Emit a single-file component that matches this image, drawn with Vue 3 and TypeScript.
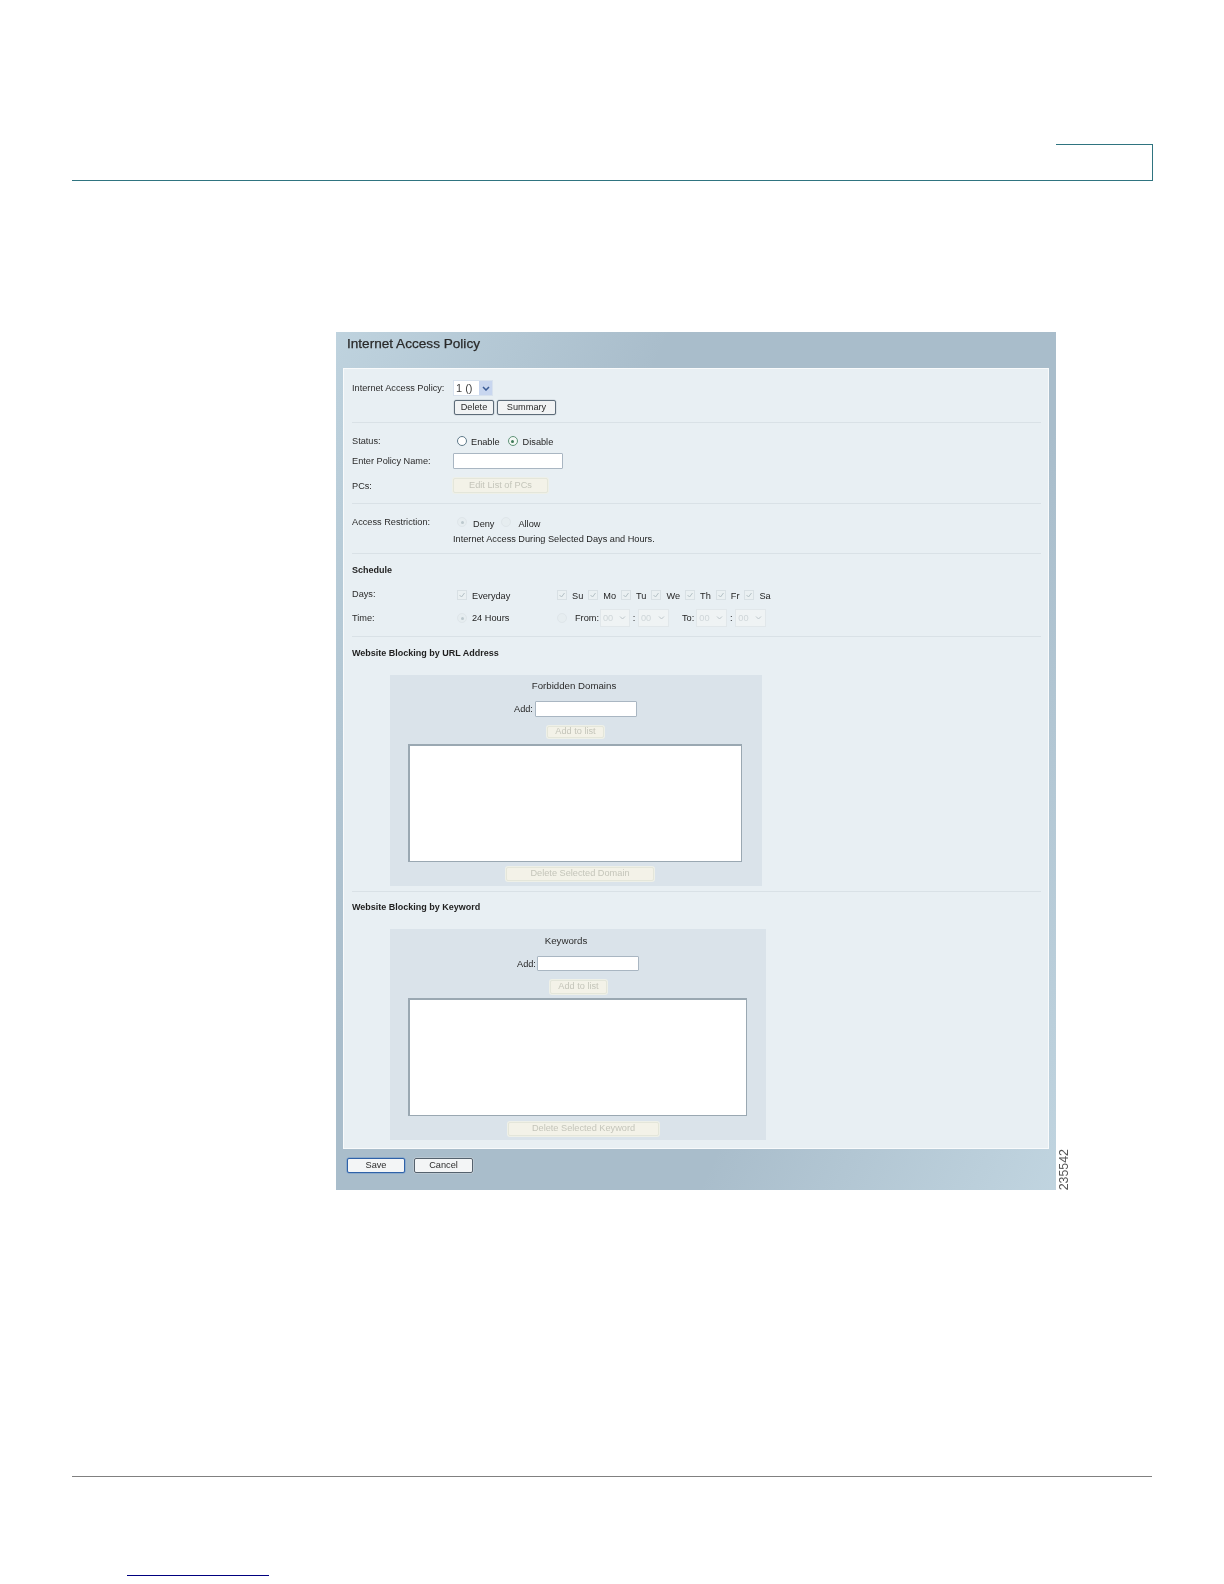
<script setup lang="ts">
const days: string[] = ['Su', 'Mo', 'Tu', 'We', 'Th', 'Fr', 'Sa']
</script>

<template>
  <div class="page">
    <header class="head"><div class="tab"></div></header>

    <section class="panel">
      <div class="blurred">
        <h1 class="title">Internet Access Policy</h1>
        <div class="inner">
          <div class="sec s1">
            <div class="row h16">
              <span class="lbl">Internet Access Policy:</span>
              <div class="sel main"><span class="val">1 ()</span><span class="arrow"><svg width="8" height="5" viewBox="0 0 8 5"><path d="M1 1l3 3 3-3" fill="none" stroke="#3a5c96" stroke-width="1.5"/></svg></span></div>
            </div>
            <div class="row mt4 indent">
              <button class="btn b-delete">Delete</button>
              <button class="btn b-summary">Summary</button>
            </div>
          </div>

          <div class="sec s2">
            <div class="row h16">
              <span class="lbl">Status:</span>
              <span class="radio on ml4"></span><span class="t low ml4">Enable</span>
              <span class="radio on sel-radio ml8"><i></i></span><span class="t low ml5">Disable</span>
            </div>
            <div class="row h16 mt4">
              <span class="lbl">Enter Policy Name:</span>
              <input class="field f-name" type="text" />
            </div>
            <div class="row h15 mt9">
              <span class="lbl">PCs:</span>
              <button class="btn off b-pcs ml1" disabled>Edit List of PCs</button>
            </div>
          </div>

          <div class="sec s3">
            <div class="row h16">
              <span class="lbl">Access Restriction:</span>
              <span class="radio ml4"><i></i></span><span class="t lower ml6">Deny</span>
              <span class="radio ml7"></span><span class="t lower ml7">Allow</span>
            </div>
            <div class="row h16 mt1">
              <span class="lbl"></span>
              <span class="t">Internet Access During Selected Days and Hours.</span>
            </div>
          </div>

          <div class="sec s4">
            <div class="row h16"><strong class="hd">Schedule</strong></div>
            <div class="row h16 mt9">
              <span class="lbl up">Days:</span>
              <div class="cell">
                <span class="check"><svg width="8" height="8" viewBox="0 0 8 8"><path d="M1.5 4l2 2 3-4" fill="none" stroke="#b4c1c6" stroke-width="1"/></svg></span>
                <span class="t low ml5">Everyday</span>
              </div>
              <div class="daylist">
                <span v-for="d in days" :key="d" class="day">
                  <span class="check"><svg width="8" height="8" viewBox="0 0 8 8"><path d="M1.5 4l2 2 3-4" fill="none" stroke="#b4c1c6" stroke-width="1"/></svg></span>
                  <span class="t low">{{ d }}</span>
                </span>
              </div>
            </div>
            <div class="row h18 mt6">
              <span class="lbl">Time:</span>
              <div class="cell">
                <span class="radio"><i></i></span><span class="t ml5">24 Hours</span>
              </div>
              <span class="radio"></span><span class="t ml8">From:</span>
              <div class="sel dis w30 ml1"><span class="val">00</span><span class="arrow"><svg width="7" height="4" viewBox="0 0 7 4"><path d="M1 .5l2.500 2.500 2.500-2.500" fill="none" stroke="#bcc5c9" stroke-width="1"/></svg></span></div>
              <span class="t colon">:</span>
              <div class="sel dis w31"><span class="val">00</span><span class="arrow"><svg width="7" height="4" viewBox="0 0 7 4"><path d="M1 .5l2.500 2.500 2.500-2.500" fill="none" stroke="#bcc5c9" stroke-width="1"/></svg></span></div>
              <span class="t to">To:</span>
              <div class="sel dis w31 ml2"><span class="val">00</span><span class="arrow"><svg width="7" height="4" viewBox="0 0 7 4"><path d="M1 .5l2.500 2.500 2.500-2.500" fill="none" stroke="#bcc5c9" stroke-width="1"/></svg></span></div>
              <span class="t colon">:</span>
              <div class="sel dis w31"><span class="val">00</span><span class="arrow"><svg width="7" height="4" viewBox="0 0 7 4"><path d="M1 .5l2.500 2.500 2.500-2.500" fill="none" stroke="#bcc5c9" stroke-width="1"/></svg></span></div>
            </div>
          </div>

          <div class="sec s5">
            <div class="row h16"><strong class="hd">Website Blocking by URL Address</strong></div>
            <div class="box b1">
              <div class="boxtitle">Forbidden Domains</div>
              <div class="addrow">
                <span class="t addlbl">Add:</span>
                <input class="field f-add" type="text" />
              </div>
              <button class="btn off b-addlist" disabled>Add to list</button>
              <textarea class="area"></textarea>
              <button class="btn off b-deldomain" disabled>Delete Selected Domain</button>
            </div>
          </div>

          <div class="sec s6">
            <div class="row h16"><strong class="hd">Website Blocking by Keyword</strong></div>
            <div class="box b2">
              <div class="boxtitle">Keywords</div>
              <div class="addrow">
                <span class="t addlbl">Add:</span>
                <input class="field f-add" type="text" />
              </div>
              <button class="btn off b-addlist" disabled>Add to list</button>
              <textarea class="area"></textarea>
              <button class="btn off b-delkey" disabled>Delete Selected Keyword</button>
            </div>
          </div>
        </div>

        <div class="actions">
          <button class="btn act save">Save</button>
          <button class="btn act">Cancel</button>
        </div>
      </div>
      <span class="figno">235542</span>
    </section>

    <div class="footrule"></div>
    <div class="footlink"></div>
  </div>
</template>

<style scoped>
.page {
  width: 1224px;
  height: 1584px;
  box-sizing: border-box;
  padding-top: 144px;
  overflow: hidden;
  background: #fff;
  font-family: "Liberation Sans", Arial, sans-serif;
}
.head {
  width: 1081px;
  margin-left: 72px;
  border-bottom: 1px solid #2f7480;
  display: flex;
  justify-content: flex-end;
}
.tab {
  width: 97px;
  height: 36px;
  box-sizing: border-box;
  border-top: 1px solid #2f7480;
  border-right: 1px solid #2f7480;
}
.panel {
  position: relative;
  width: 720px;
  height: 858px;
  margin: 151px 0 0 336px;
}
.blurred {
  height: 858px;
  filter: blur(0.7px);
  background:
    linear-gradient(115deg, rgba(205, 225, 235, 0.6) 0%, rgba(205, 225, 235, 0) 30%, rgba(205, 225, 235, 0) 68%, rgba(205, 225, 235, 0.65) 100%),
    #a9bdcb;
  color: #1f1f1f;
  font-size: 9.2px;
}
.title {
  margin: 0;
  height: 36px;
  box-sizing: border-box;
  padding: 4px 0 0 11px;
  font-size: 13.6px;
  line-height: 16px;
  font-weight: 400;
  color: #2a2a2a;
  -webkit-text-stroke: 0.25px #2a2a2a;
}
.inner {
  width: 706px;
  height: 781px;
  margin-left: 7px;
  background: #e8eff3;
  box-shadow: inset 0 0 0 1px #f8fafb;
}
.sec {
  box-sizing: border-box;
  margin: 0 8px 0 9px;
  border-bottom: 1px solid #d9e1e6;
}
.s1 { height: 55px; padding-top: 12px; }
.s2 { height: 81px; padding-top: 10px; }
.s3 { height: 50px; padding-top: 10px; }
.s4 { height: 83px; padding-top: 8px; }
.s5 { height: 255px; padding-top: 8px; }
.s6 { height: 257px; padding-top: 7px; border-bottom: 0; }

.row { display: flex; align-items: center; white-space: nowrap; }
.h15 { height: 15px; }
.h16 { height: 16px; }
.h18 { height: 18px; }
.mt1 { margin-top: 1px; }
.mt4 { margin-top: 4px; }
.mt6 { margin-top: 6px; }
.mt9 { margin-top: 9px; }
.ml1 { margin-left: 1px; }
.ml2 { margin-left: 2px; }
.ml4 { margin-left: 4px; }
.ml5 { margin-left: 5px; }
.ml6 { margin-left: 6px; }
.ml7 { margin-left: 7px; }
.ml8 { margin-left: 8px; }
.indent { padding-left: 102px; }

.lbl { width: 101px; flex: none; color: #2b2b2b; }
.up { padding-bottom: 2px; }
.t { flex: none; }
.low { padding-top: 2px; }
.lower { padding-top: 4px; }
.hd { font-size: 9px; font-weight: 700; color: #1f1f1f; }

.sel {
  box-sizing: border-box;
  display: flex;
  align-items: stretch;
  flex: none;
}
.sel .val { flex: 1; display: flex; align-items: center; padding-left: 2px; }
.sel .arrow { display: flex; align-items: center; justify-content: center; }
.main {
  width: 40px;
  height: 16px;
  background: #fff;
  font-size: 11px;
  color: #444;
  border: 1px solid #d8e2ee;
}
.main .arrow { width: 13px; background: #c8d6ef; }
.dis {
  height: 18px;
  background: #eff3f4;
  border: 1px solid #e1e7ea;
  color: #cfd6d9;
}
.dis .arrow { width: 14px; }
.w30 { width: 30px; }
.w31 { width: 31px; }
.colon { width: 8px; text-align: center; }
.to { margin-left: 13px; }

.btn {
  box-sizing: border-box;
  margin: 0;
  padding: 0;
  font: inherit;
  line-height: 1;
  flex: none;
  display: block;
  text-align: center;
  color: #2b2b2b;
  height: 15px;
  background: #f1f3f4;
  border: 1px solid #5d6c79;
  border-radius: 2px;
  box-shadow: 0 0 0 .5px #c9d2d8;
}
.off {
  background: #f3f2e8;
  border: 1px solid #e4e6da;
  color: #c4c5ba;
  box-shadow: 0 0 0 1px #eef0e8;
}
.b-delete { width: 40px; }
.b-summary { width: 59px; margin-left: 3px; }
.b-pcs { width: 95px; }
.b-addlist { width: 57px; height: 13px; }
.b-deldomain { width: 148px; height: 14px; margin: 5px 0 0 116px; }
.b-delkey { width: 151px; height: 14px; margin: 6px 0 0 118px; }

.field {
  box-sizing: border-box;
  display: block;
  margin: 0;
  padding: 0;
  background: #fff;
  border: 1px solid #a9b6c2;
  border-radius: 1px;
  outline: 0;
  flex: none;
}
.f-name { width: 110px; height: 16px; }
.f-add { width: 102px; height: 16px; }

.radio {
  position: relative;
  box-sizing: border-box;
  width: 10px;
  height: 10px;
  border-radius: 50%;
  flex: none;
  background: #e6edf0;
  border: 1px solid #dfe6ea;
}
.radio i {
  position: absolute;
  left: 2.500px;
  top: 2.500px;
  width: 3px;
  height: 3px;
  border-radius: 50%;
  background: #bcc8cd;
}
.radio.on { background: #fff; border-color: #5f7a8a; }
.radio.sel-radio { border-color: #5f9378; background: #f2f7f4; }
.radio.sel-radio i { background: #3d7a58; }

.check {
  box-sizing: border-box;
  width: 10px;
  height: 10px;
  flex: none;
  display: flex;
  align-items: center;
  justify-content: center;
  background: #eaf0f2;
  border: 1px solid #d8e0e4;
}
.cell { width: 100px; margin-left: 4px; flex: none; display: flex; align-items: center; }
.daylist { display: flex; align-items: center; gap: 5px; }
.day { display: flex; align-items: center; gap: 5px; }

.box {
  box-sizing: border-box;
  height: 211px;
  margin: 14px 0 0 38px;
  background: #dae3ea;
  padding-top: 3px;
}
.b1 { width: 372px; }
.b2 { width: 376px; padding-top: 4px; }
.boxtitle { height: 16px; line-height: 16px; text-align: center; font-size: 9.7px; color: #2b2b2b; }
.b1 .boxtitle { padding-right: 4px; }
.b2 .boxtitle { padding-right: 24px; }
.addrow { display: flex; align-items: center; margin-top: 7px; }
.b1 .addrow { padding-left: 124px; }
.b2 .addrow { padding-left: 127px; }
.addlbl { width: 21px; }
.b2 .addlbl { width: 20px; }
.b2 .f-add { height: 15px; }
.b-addlist { margin-top: 9px; }
.b1 .b-addlist { margin-left: 157px; height: 12px; }
.b2 .b-addlist { margin-left: 160px; height: 14px; }
.area {
  display: block;
  box-sizing: border-box;
  margin: 6px 0 0 18px;
  padding: 0;
  height: 118px;
  resize: none;
  outline: 0;
  background: #fff;
  border: 2px solid #9aa8b2;
  border-bottom-width: 1px;
  border-right-width: 1px;
  border-radius: 0;
}
.b1 .area { width: 334px; }
.b2 .area { width: 339px; margin-top: 4px; }

.actions { display: flex; gap: 9px; padding: 9px 0 0 11px; }
.act { width: 59px; height: 15px; background: #f3f5f6; border-color: #55626e; }
.save { width: 58px; border-color: #2f62a8; box-shadow: 0 0 0 .5px #6f97c9; }

.figno {
  position: absolute;
  left: 722px;
  bottom: 0;
  width: 12px;
  writing-mode: vertical-rl;
  transform: rotate(180deg);
  font-size: 12.400px;
  line-height: 12px;
  color: #555;
  filter: blur(0.3px);
}
.footrule {
  width: 1080px;
  height: 1px;
  margin: 286px 0 0 72px;
  background: #808080;
}
.footlink {
  width: 142px;
  height: 1px;
  margin: 98px 0 0 127px;
  background: #00007f;
}
</style>
